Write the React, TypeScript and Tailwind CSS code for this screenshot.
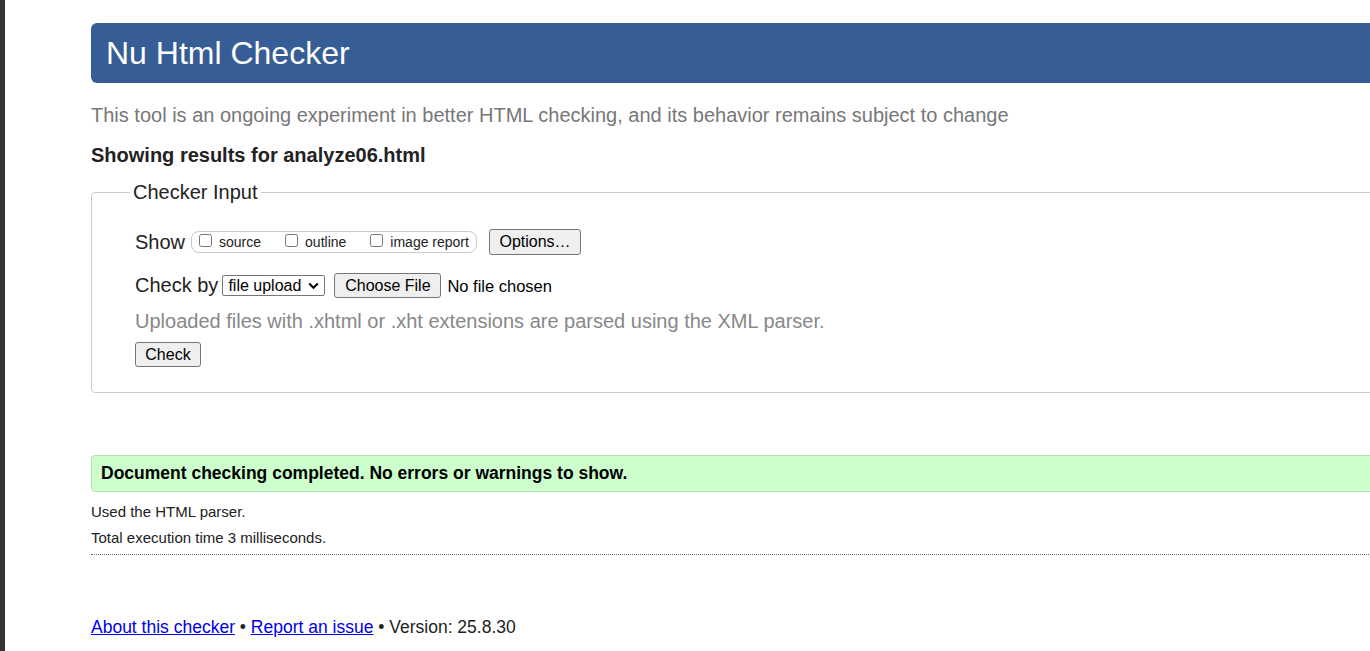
import React from "react";

const font = "font-['Liberation_Sans',Arial,sans-serif]";

function NativeButton({ label, className = "" }: { label: string; className?: string }) {
  return (
    <button
      type="button"
      className={`rounded-[3px] border border-[#767676] bg-[#efefef] px-[9px] text-[16px] leading-[18px] text-black ${className}`}
    >
      {label}
    </button>
  );
}

function Check({ label }: { label: string }) {
  return (
    <label className="flex items-end gap-[7px] text-[14px] leading-[16px] text-[#222]">
      <input type="checkbox" className="mb-[3px] h-[13px] w-[13px]" />
      <span>{label}</span>
    </label>
  );
}

export default function App() {
  return (
    <div className={`flex h-[651px] w-[1370px] overflow-hidden bg-white ${font}`}>
      <div className="w-[5px] shrink-0 bg-[#333]" />

      <div className="w-[1500px] shrink-0 pl-[86px] pt-[23px]">
        {/* Header */}
        <h1 className="flex h-[60px] items-center rounded-l-[6px] bg-[#365d95] pl-[15px] text-[32px] leading-none text-white">
          Nu Html Checker
        </h1>

        <p className="mt-[21px] text-[20px] leading-[23px] text-[#777]">
          This tool is an ongoing experiment in better HTML checking, and its behavior remains subject to change
        </p>

        <h2 className="mt-[17px] text-[20px] font-bold leading-[23px] text-[#222]">
          Showing results for analyze06.html
        </h2>

        {/* Checker input */}
        <fieldset className="mt-[14px] rounded-[4px] border border-[#ccc] pb-[25px] pl-[43px] pt-[25px]">
          <legend className="-ml-[5px] px-[3px] text-[20px] leading-[23px] text-[#222]">Checker Input</legend>

          <div className="flex h-[26px] items-center">
            <span className="text-[20px] leading-[23px] text-[#222]">Show</span>
            <div className="ml-[6px] flex h-[22px] w-[286px] items-center gap-[24px] rounded-[8px] border border-[#ccc] pl-[7px]">
              <Check label="source" />
              <Check label="outline" />
              <Check label="image report" />
            </div>
            <NativeButton label="Options…" className="ml-[12px] h-[26px] w-[92px]" />
          </div>

          <div className="mt-[18px] flex h-[25px] items-center">
            <span className="text-[20px] leading-[23px] text-[#222]">Check by</span>
            <div className="ml-[4px] flex h-[21px] w-[103px] items-center justify-between rounded-[2px] border border-[#767676] bg-white pl-[5px] pr-[5px] text-[16px] leading-[18px] text-black">
              <span>file upload</span>
              <svg width="11" height="8" viewBox="0 0 11 8" fill="none">
                <path d="M1.2 1.5 5.5 5.8 9.8 1.5" stroke="black" strokeWidth="2" />
              </svg>
            </div>
            <NativeButton label="Choose File" className="ml-[9px] h-[25px] w-[107px]" />
            <span className="ml-[6px] text-[16.5px] leading-[18px] text-black">No file chosen</span>
          </div>

          <p className="mt-[12px] text-[20px] leading-[23px] text-[#888]">
            Uploaded files with .xhtml or .xht extensions are parsed using the XML parser.
          </p>

          <NativeButton label="Check" className="mt-[9px] h-[25px] w-[66px]" />
        </fieldset>

        {/* Result */}
        <div className="mt-[62px] flex h-[37px] items-center rounded-l-[4px] border border-[#b9dfb9] bg-[#ccffcc] pl-[9px]">
          <strong className="text-[17.5px] leading-[21px] text-black">
            Document checking completed. No errors or warnings to show.
          </strong>
        </div>

        <p className="mt-[12px] text-[15px] leading-[16px] text-[#222]">Used the HTML parser.</p>
        <p className="mt-[10px] text-[15px] leading-[16px] text-[#222]">Total execution time 3 milliseconds.</p>
        <div className="mt-[8px] border-b border-dotted border-[#666]" />

        {/* Footer */}
        <p className="mt-[62px] text-[17.5px] leading-[21px] text-[#222]">
          <a href="#" className="text-[#0000ee] underline">About this checker</a>
          {" • "}
          <a href="#" className="text-[#0000ee] underline">Report an issue</a>
          {" • Version: 25.8.30"}
        </p>
      </div>
    </div>
  );
}
